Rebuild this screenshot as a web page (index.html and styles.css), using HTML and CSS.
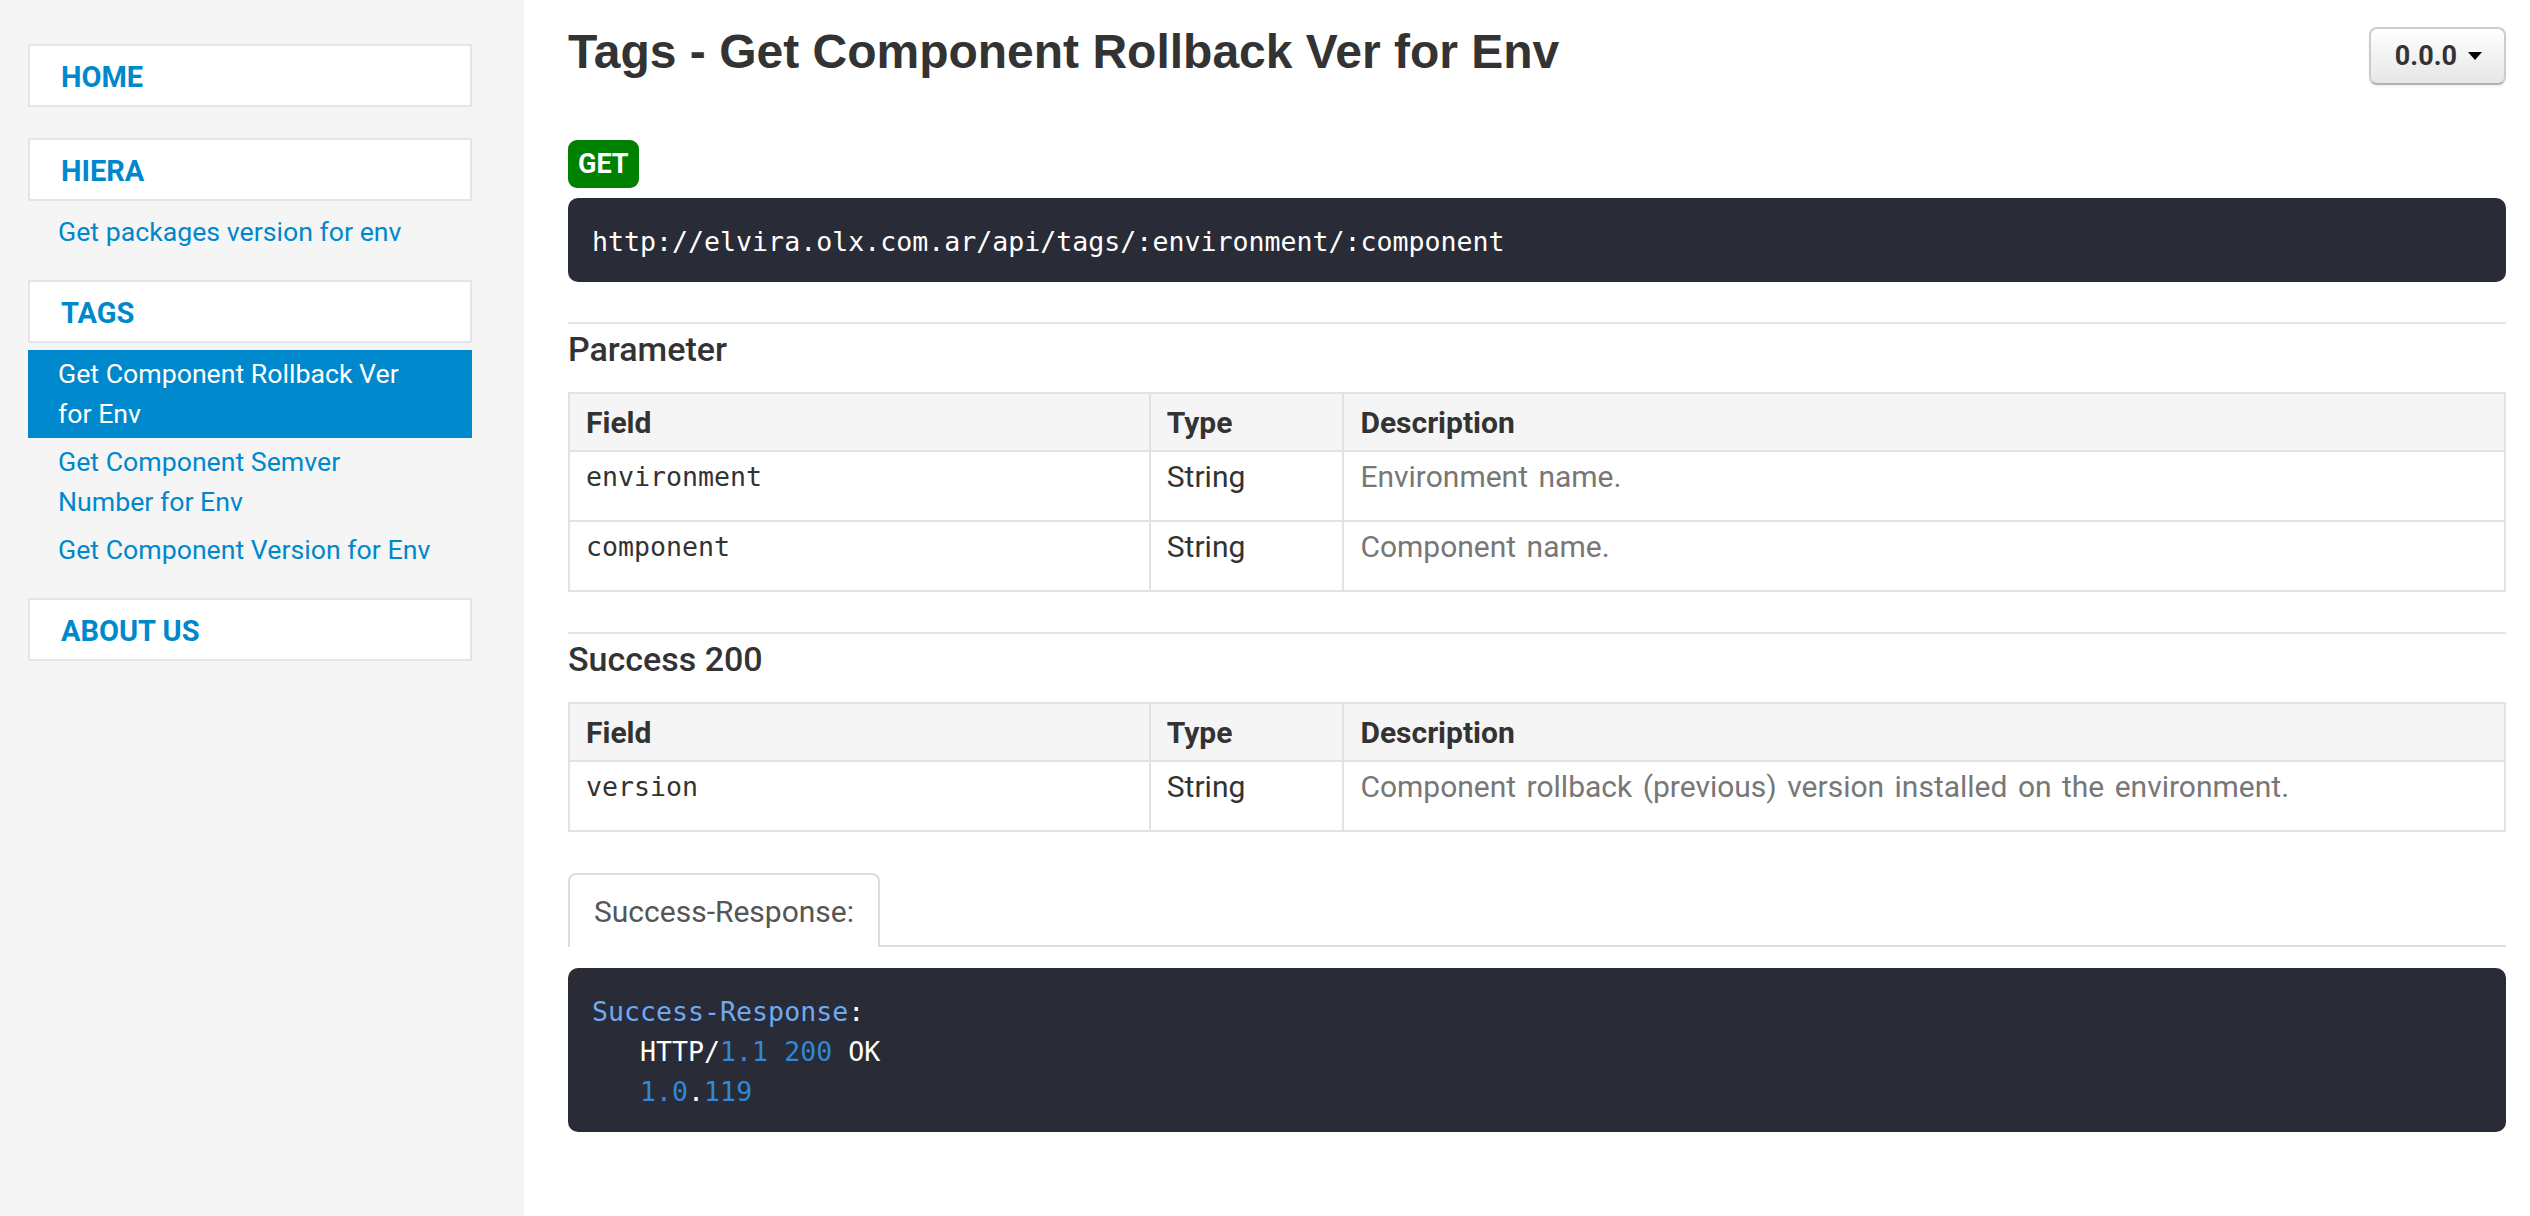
FILE: index.html
```html
<!DOCTYPE html>
<html lang="en">
<head>
<meta charset="utf-8">
<title>Tags - Get Component Rollback Ver for Env</title>
<link rel="stylesheet" href="styles.css">
</head>
<body>
<div class="layout">
  <nav class="sidenav">
    <div class="nav-group">
      <a class="nav-header" href="#">HOME</a>
    </div>
    <div class="nav-group">
      <a class="nav-header" href="#">HIERA</a>
      <a class="nav-item" href="#">Get packages version for env</a>
    </div>
    <div class="nav-group">
      <a class="nav-header" href="#">TAGS</a>
      <a class="nav-item active" href="#">Get Component Rollback Ver for Env</a>
      <a class="nav-item" href="#">Get Component Semver Number for Env</a>
      <a class="nav-item" href="#">Get Component Version for Env</a>
    </div>
    <div class="nav-group">
      <a class="nav-header" href="#">ABOUT US</a>
    </div>
  </nav>

  <main class="content">
    <div class="page-head">
      <h1 class="title">Tags - Get Component Rollback Ver for Env</h1>
      <button class="version-btn" type="button"><span>0.0.0</span><span class="caret"></span></button>
    </div>

    <div class="method-row"><span class="method">GET</span></div>
    <pre class="code"><code>http://elvira.olx.com.ar/api/tags/:environment/:component</code></pre>

    <section class="block">
      <h2 class="block-title">Parameter</h2>
      <table class="fields">
        <thead>
          <tr><th class="col-field">Field</th><th class="col-type">Type</th><th class="col-desc">Description</th></tr>
        </thead>
        <tbody>
          <tr><td class="code-cell">environment</td><td>String</td><td class="desc">Environment name.</td></tr>
          <tr><td class="code-cell">component</td><td>String</td><td class="desc">Component name.</td></tr>
        </tbody>
      </table>
    </section>

    <section class="block">
      <h2 class="block-title">Success 200</h2>
      <table class="fields">
        <thead>
          <tr><th class="col-field">Field</th><th class="col-type">Type</th><th class="col-desc">Description</th></tr>
        </thead>
        <tbody>
          <tr><td class="code-cell">version</td><td>String</td><td class="desc">Component rollback (previous) version installed on the environment.</td></tr>
        </tbody>
      </table>
    </section>

    <ul class="tabs">
      <li class="tab active">Success-Response:</li>
    </ul>
    <pre class="code code-response"><code><span class="tk-key">Success-Response</span>:
   HTTP/<span class="tk-num">1.1</span> <span class="tk-num">200</span> OK
   <span class="tk-num">1.0</span>.<span class="tk-num">119</span></code></pre>
  </main>
</div>
</body>
</html>
```

FILE: styles.css
```css
html, body {
  margin: 0;
  padding: 0;
  background: #ffffff;
}

body {
  font-family: Roboto, "Noto Sans", sans-serif;
  color: #333333;
}

.layout {
  display: flex;
  min-height: 100vh;
}

/* ---------- sidebar ---------- */
.sidenav {
  width: 524px;
  flex-shrink: 0;
  box-sizing: border-box;
  background: #f5f5f5;
  padding: 44px 52px 0 28px;
  display: flex;
  flex-direction: column;
}

.nav-group {
  display: flex;
  flex-direction: column;
  margin-bottom: 24px;
}

.nav-header {
  display: block;
  background: #ffffff;
  border: 2px solid #e5e5e5;
  padding: 11px 0 8px 31px;
  line-height: 40px;
  font-size: 29px;
  font-weight: 700;
  color: #0088cc;
  text-decoration: none;
  margin-bottom: 7px;
}

.nav-item {
  display: block;
  padding: 4px 40px 4px 30px;
  line-height: 40px;
  font-size: 26.7px;
  color: #0088cc;
  text-decoration: none;
}

.nav-item.active {
  background: #0088cc;
  color: #ffffff;
}

/* ---------- content ---------- */
.content {
  flex: 1;
  min-width: 0;
  padding: 25px 24px 40px 44px;
}

.page-head {
  display: flex;
  justify-content: space-between;
  align-items: flex-start;
}

.title {
  margin: 0;
  font-family: "Liberation Sans", Arial, sans-serif;
  font-size: 48px;
  font-weight: 700;
  line-height: 53px;
  color: #333333;
}

.version-btn {
  margin-top: 2px;
  display: flex;
  align-items: center;
  padding: 7px 22px 7px 24px;
  border: 2px solid #cccccc;
  border-bottom-color: #b3b3b3;
  border-radius: 8px;
  background: linear-gradient(#ffffff, #e6e6e6);
  box-shadow: inset 0 2px 0 rgba(255, 255, 255, 0.2), 0 2px 3px rgba(0, 0, 0, 0.05);
  font-family: Roboto, sans-serif;
  font-size: 27px;
  font-weight: 700;
  line-height: 40px;
  color: #333333;
}

.caret {
  display: inline-block;
  width: 0;
  height: 0;
  margin-left: 11px;
  border-top: 8px solid #000000;
  border-left: 7.5px solid transparent;
  border-right: 7.5px solid transparent;
}

.method-row {
  margin-top: 55px;
}

.method {
  display: inline-block;
  padding: 0 10px;
  height: 48px;
  line-height: 48px;
  border-radius: 9px;
  background: #008000;
  color: #ffffff;
  font-size: 27px;
  font-weight: 700;
}

.code {
  margin: 10px 0 0;
  padding: 24px 24px 20px;
  border-radius: 10px;
  background: #292b36;
  color: #ffffff;
  font-family: "DejaVu Sans Mono", "Liberation Mono", monospace;
  font-size: 26.6px;
  line-height: 40px;
  white-space: pre;
}

.code-response {
  margin-top: 21px;
}

.tk-key {
  color: #70a9f0;
}

.tk-num {
  color: #2f88d8;
}

.block {
  margin-top: 40px;
  border-top: 2px solid #e5e5e5;
}

.block-title {
  margin: 5px 0 23px;
  font-size: 34px;
  font-weight: 500;
  line-height: 40px;
  color: #333333;
}

.fields {
  width: 100%;
  border-collapse: collapse;
  border: 2px solid #e2e2e2;
  font-size: 30px;
}

.fields th,
.fields td {
  border: 2px solid #e2e2e2;
  text-align: left;
  vertical-align: top;
  line-height: 36px;
}

.fields th {
  background: #f5f5f5;
  padding: 11px 16px 9px;
  font-weight: 700;
  color: #333333;
}

.fields td {
  padding: 7px 16px 25px;
  color: #333333;
}

.col-field { width: 30%; }
.col-type { width: 10%; }
.col-desc { width: 60%; }

.fields td.code-cell {
  font-family: "DejaVu Sans Mono", "Liberation Mono", monospace;
  font-size: 26.6px;
}

.fields td.desc {
  color: #777777;
  word-spacing: 3px;
}

.tabs {
  list-style: none;
  margin: 41px 0 0;
  padding: 0;
  display: flex;
  border-bottom: 2px solid #dddddd;
}

.tab {
  margin-bottom: -2px;
  padding: 17px 24px 15px;
  border: 2px solid #dddddd;
  border-bottom: none;
  border-radius: 8px 8px 0 0;
  background: #ffffff;
  font-size: 30px;
  line-height: 40px;
  color: #555555;
}
```
